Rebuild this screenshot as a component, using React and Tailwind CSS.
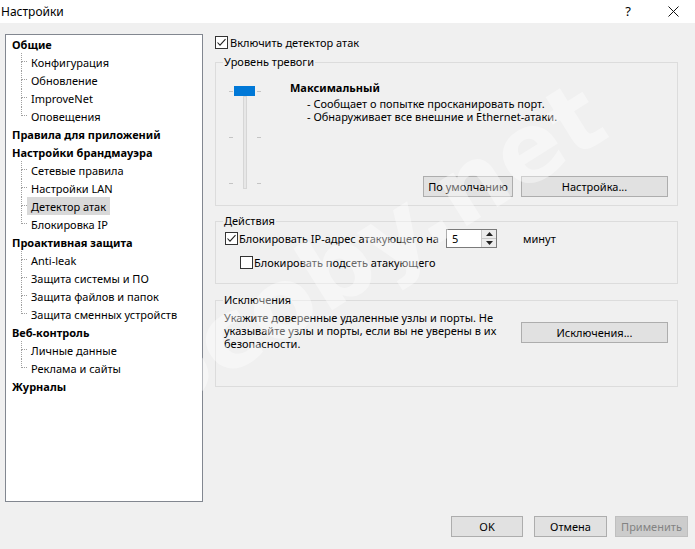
import React from "react";

const tree = [
  { title: "Общие", children: ["Конфигурация", "Обновление", "ImproveNet", "Оповещения"] },
  { title: "Правила для приложений", children: [] },
  { title: "Настройки брандмауэра", children: ["Сетевые правила", "Настройки LAN", "Детектор атак", "Блокировка IP"] },
  { title: "Проактивная защита", children: ["Anti-leak", "Защита системы и ПО", "Защита файлов и папок", "Защита сменных устройств"] },
  { title: "Веб-контроль", children: ["Личные данные", "Реклама и сайты"] },
  { title: "Журналы", children: [] },
];

function CheckBox({ checked }) {
  return (
    <div className="w-[13px] h-[13px] border border-[#333333] bg-white flex items-center justify-center shrink-0">
      {checked && (
        <svg width="11" height="11" viewBox="0 0 11 11">
          <path d="M1.5 5.5 L4 8.2 L9.5 2.2" fill="none" stroke="#222" strokeWidth="1.1" />
        </svg>
      )}
    </div>
  );
}

function Btn({ children, className = "", disabled }) {
  return (
    <div
      className={
        "h-[21px] flex items-center justify-center border text-[11px] " +
        (disabled ? "bg-[#cccccc] border-[#bfbfbf] text-[#838383] " : "bg-[#e1e1e1] border-[#adadad] text-black ") +
        className
      }
    >
      {children}
    </div>
  );
}

function Tree() {
  return (
    <div className="w-[198px] h-[468px] border border-[#828790] bg-white">
      {tree.map((g) => (
        <div key={g.title}>
          <div className="h-[18px] flex items-center pl-[6px] font-bold">{g.title}</div>
          {g.children.map((c, i) => {
            const last = i === g.children.length - 1;
            const sel = c === "Детектор атак";
            return (
              <div key={c} className="h-[18px] flex">
                <div className="ml-[15px] w-[6px] flex flex-col">
                  <div className="h-[9px] border-l border-b border-dotted border-[#a0a0a0]" />
                  <div className={"flex-1 " + (last ? "" : "border-l border-dotted border-[#a0a0a0]")} />
                </div>
                <div className={"h-[18px] px-[4px] flex items-center " + (sel ? "bg-[#d9d9d9]" : "")}>{c}</div>
              </div>
            );
          })}
        </div>
      ))}
    </div>
  );
}

function Group({ title, children, className = "" }) {
  return (
    <fieldset className={"border border-[#dcdcdc] " + className}>
      <legend className="ml-[7px] px-[1px] leading-[14px]">{title}</legend>
      {children}
    </fieldset>
  );
}

function Slider() {
  return (
    <svg width="36" height="108" viewBox="0 0 36 108" className="shrink-0">
      <rect x="15.5" y="12.5" width="3" height="92" fill="#e7e7e7" stroke="#d6d6d6" />
      <rect x="6" y="2" width="21" height="10" fill="#0078d7" />
      {[7, 53, 99].map((y) => (
        <g key={y}>
          <line x1="1" x2="5" y1={y + 0.5} y2={y + 0.5} stroke="#c4c4c4" />
          <line x1="29" x2="33" y1={y + 0.5} y2={y + 0.5} stroke="#c4c4c4" />
        </g>
      ))}
    </svg>
  );
}

export default function App() {
  return (
    <div className="w-[695px] h-[549px] bg-[#f0f0f0] relative overflow-hidden text-[11px] leading-[13px] text-black font-['Noto_Sans',sans-serif]">
      {/* title bar */}
      <div className="h-[23px] bg-white flex items-center">
        <div className="pl-[1px] text-[12px] -mt-[1px]">Настройки</div>
        <div className="ml-auto w-[10px] text-[13px] text-center">?</div>
        <div className="ml-[34px] mr-[16px] w-[12px] flex items-center justify-center">
          <svg width="11" height="11" viewBox="0 0 11 11">
            <path d="M0.5 0.5 L10.5 10.5 M10.5 0.5 L0.5 10.5" stroke="#111" strokeWidth="1" />
          </svg>
        </div>
      </div>

      <div className="flex pt-[11px] pl-[5px]">
        <Tree />
        <div className="ml-[12px] w-[463px] flex flex-col">
          <div className="h-[15px] mt-[1px] flex items-center">
            <CheckBox checked />
            <span className="ml-[2px]">Включить детектор атак</span>
          </div>

          <Group title="Уровень тревоги" className="mt-[5px]">
            <div className="h-[136px] flex">
              <div className="ml-[12px] mt-[15px]">
                <Slider />
              </div>
              <div className="flex-1 flex flex-col ml-[26px]">
                <div className="mt-[12px] leading-[14px] font-bold">Максимальный</div>
                <div className="mt-[2px] ml-[17px]">
                  <div>- Сообщает о попытке просканировать порт.</div>
                  <div>- Обнаруживает все внешние и Ethernet-атаки.</div>
                </div>
                <div className="mt-auto mb-[8px] mr-[9px] flex justify-end gap-[8px]">
                  <Btn className="w-[90px]">По умолчанию</Btn>
                  <Btn className="w-[147px]">Настройка...</Btn>
                </div>
              </div>
            </div>
          </Group>

          <Group title="Действия" className="mt-[8px]">
            <div className="h-[55px] flex flex-col">
              <div className="mt-[1px] h-[19px] flex items-center ml-[9px]">
                <CheckBox checked />
                <span className="ml-[1px] w-[207px]">Блокировать IP-адрес атакующего на</span>
                <div className="w-[51px] h-[19px] border border-[#7a7a7a] bg-white flex">
                  <div className="flex-1 pl-[5px] flex items-center">5</div>
                  <div className="w-[15px] flex flex-col border-l border-[#c8c8c8]">
                    <div className="flex-1 bg-[#ececec] flex items-center justify-center border-b border-[#c8c8c8]">
                      <svg width="7" height="4" viewBox="0 0 7 4"><path d="M0 4 L3.5 0 L7 4 Z" fill="#222" /></svg>
                    </div>
                    <div className="flex-1 bg-[#ececec] flex items-center justify-center">
                      <svg width="7" height="4" viewBox="0 0 7 4"><path d="M0 0 L3.5 4 L7 0 Z" fill="#222" /></svg>
                    </div>
                  </div>
                </div>
                <span className="ml-[26px]">минут</span>
              </div>
              <div className="mt-[7px] h-[15px] flex items-center ml-[24px]">
                <CheckBox />
                <span className="ml-[1px]">Блокировать подсеть атакующего</span>
              </div>
            </div>
          </Group>

          <Group title="Исключения" className="mt-[9px]">
            <div className="h-[79px] flex">
              <div className="ml-[8px] mt-[4px]">
                Укажите доверенные удаленные узлы и порты. Не
                <br />
                указывайте узлы и порты, если вы не уверены в их
                <br />
                безопасности.
              </div>
              <div className="ml-auto mr-[9px] mt-[15px]">
                <Btn className="w-[147px]">Исключения...</Btn>
              </div>
            </div>
          </Group>
        </div>
      </div>

      <div className="flex justify-end pr-[7px] mt-[14px]">
        <Btn className="w-[72px]">OK</Btn>
        <Btn className="w-[73px] ml-[11px]">Отмена</Btn>
        <Btn className="w-[73px] ml-[8px]" disabled>Применить</Btn>
      </div>

      {/* watermark */}
      <div className="absolute left-[-3px] top-[212px] w-[700px] text-center pointer-events-none select-none rotate-[-32deg] text-[96px] leading-[100px] font-bold text-white/40 font-['DejaVu_Sans',sans-serif]">
        cocoby.net
      </div>
    </div>
  );
}
